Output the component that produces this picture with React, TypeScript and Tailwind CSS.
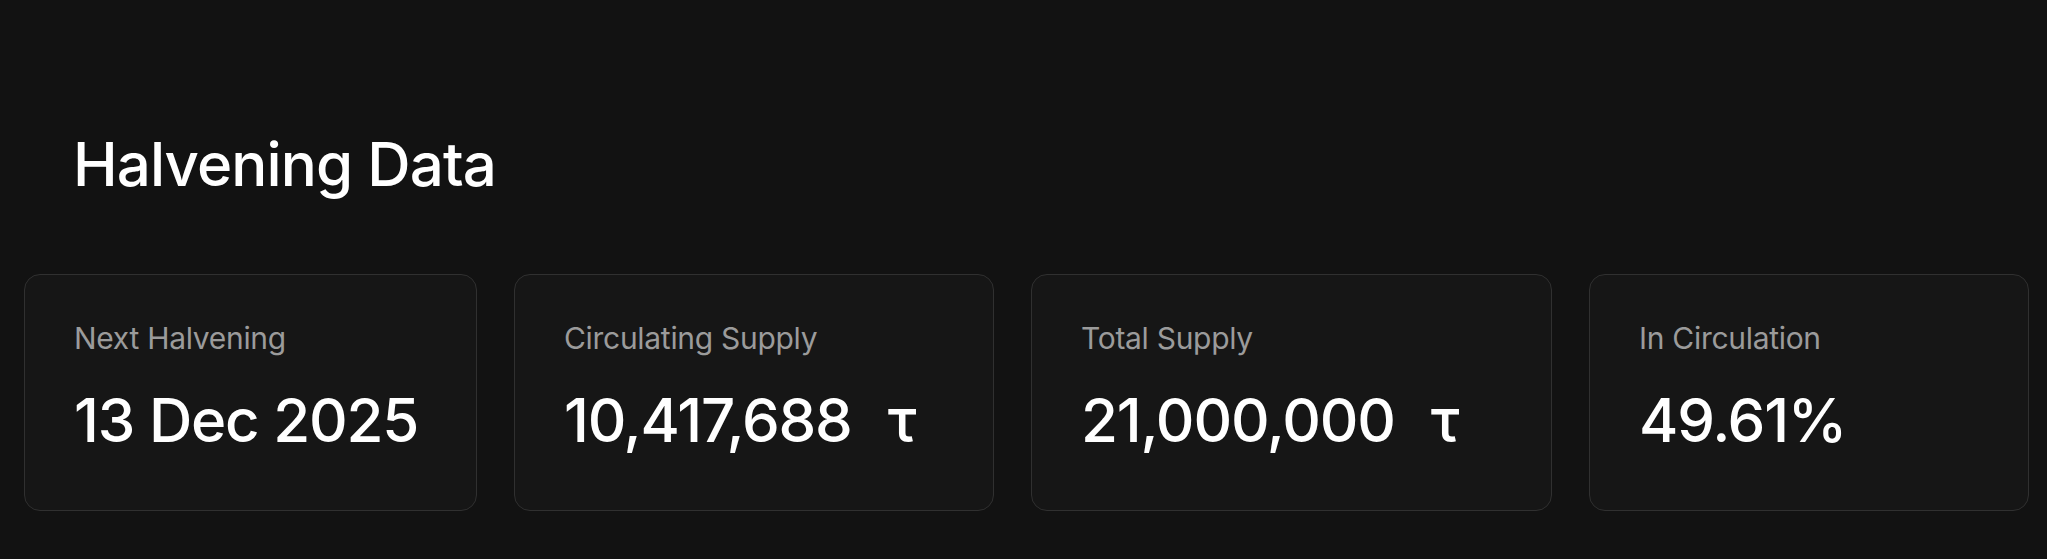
// Halvening Data — four stat cards on a dark page.

const FONT = "font-['Inter','Noto_Sans',sans-serif]";

interface Stat {
  label: string;
  value: string;
  tau?: boolean;
}

const STATS: Stat[] = [
  { label: 'Next Halvening', value: '13 Dec 2025' },
  { label: 'Circulating Supply', value: '10,417,688', tau: true },
  { label: 'Total Supply', value: '21,000,000', tau: true },
  { label: 'In Circulation', value: '49.61%' },
];

function StatCard({ stat }: { stat: Stat }) {
  return (
    <div className="rounded-[16px] border border-[#303030] bg-[#161616] pl-[49px] pr-4 pt-[48px] pb-[60px]">
      <div className="text-[30px] leading-none text-[#9b9b9b] tracking-[-0.01em] whitespace-nowrap">
        {stat.label}
      </div>
      <div className="mt-[37px] flex items-baseline text-[60px] leading-none font-medium text-white tracking-[-0.02em] whitespace-nowrap">
        <span>{stat.value}</span>
        {stat.tau && <span className="ml-[36px]">τ</span>}
      </div>
    </div>
  );
}

export default function App() {
  return (
    <div className={`min-h-screen bg-[#121212] ${FONT} antialiased`}>
      <div className="pt-[134px] pl-[73px]">
        <h1 className="text-[60px] leading-none font-medium text-white tracking-[-0.015em]">
          Halvening Data
        </h1>
      </div>
      <div className="mt-[80px] pl-[24px] grid grid-cols-[453px_480px_521px_440px] gap-[37px]">
        {STATS.map((s) => (
          <StatCard key={s.label} stat={s} />
        ))}
      </div>
    </div>
  );
}
